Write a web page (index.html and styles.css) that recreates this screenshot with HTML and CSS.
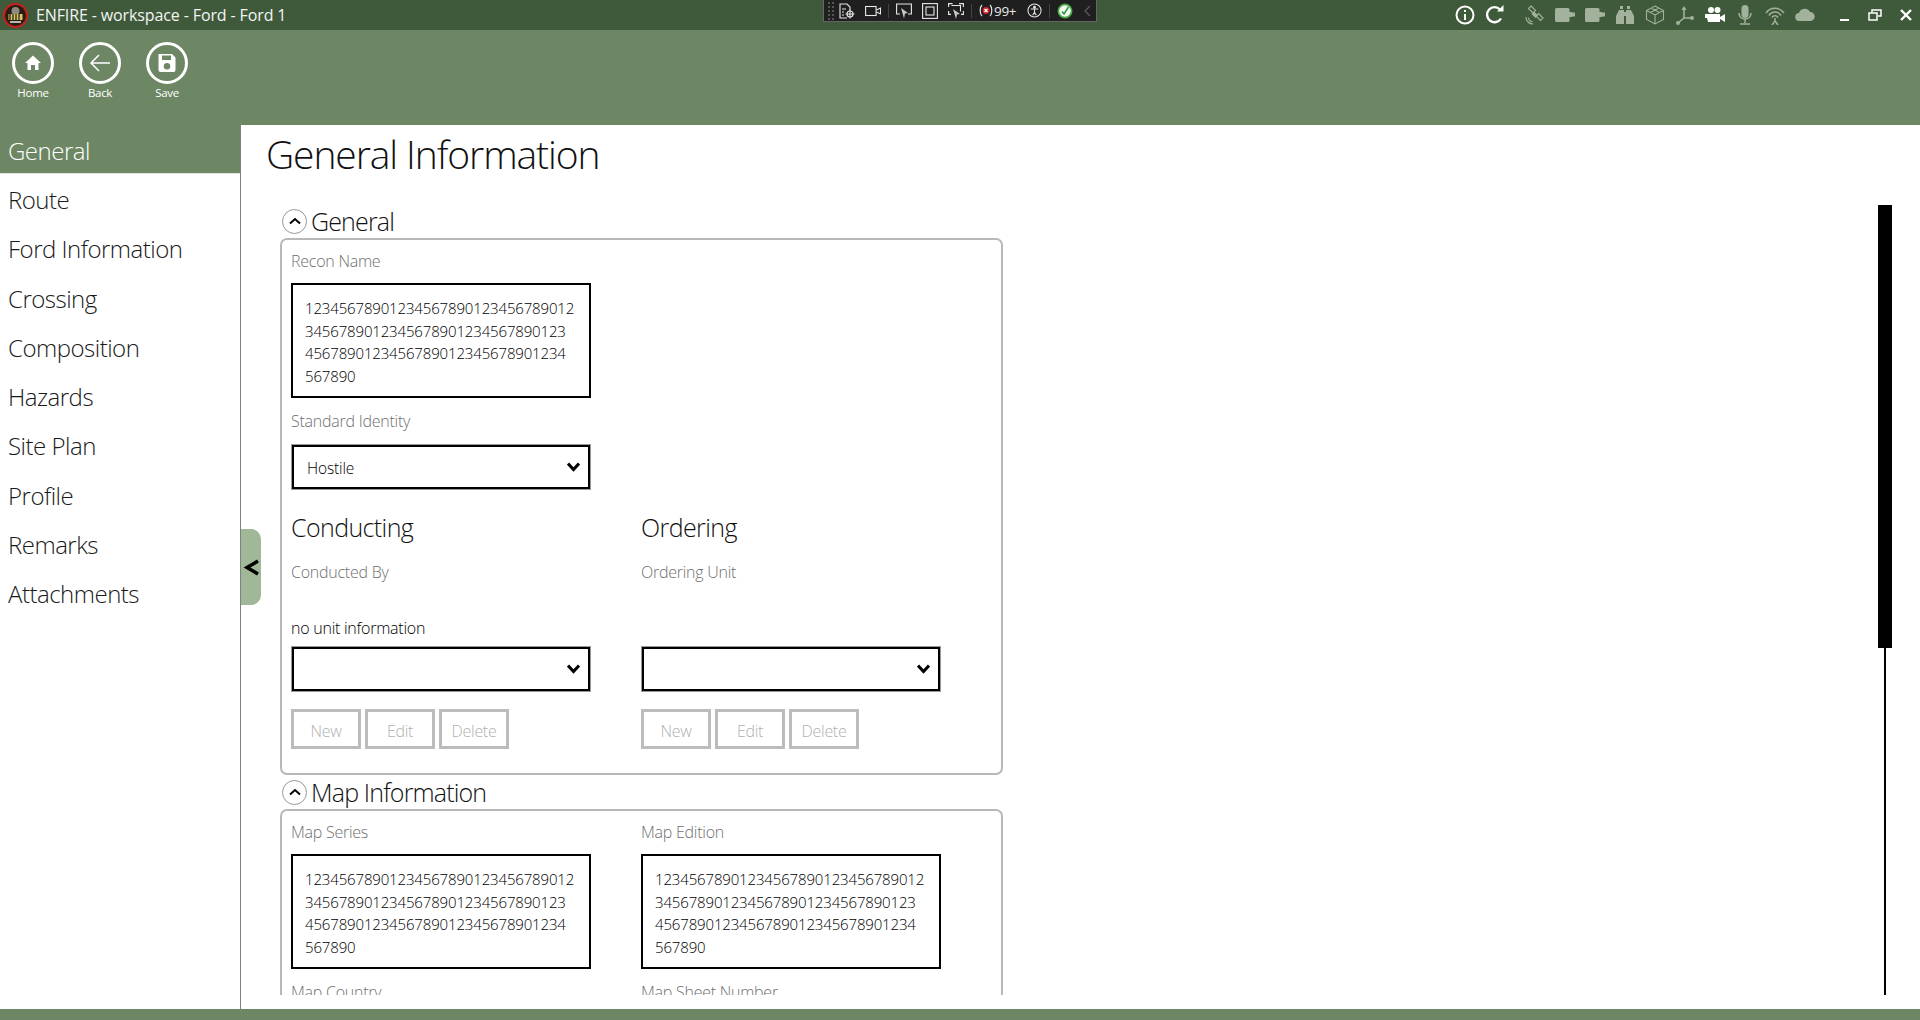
FILE: index.html
```html
<!DOCTYPE html>
<html>
<head>
    <title>ENFIRE - workspace - Ford - Ford 1</title>
    <link rel="stylesheet" href="styles.css">
</head>
<body>
    <div class="app">
        <header class="titlebar">
            <div class="title-left">
                <svg class="logo" width="25" height="25" viewBox="0 0 25 25">
                    <circle cx="12.5" cy="12.5" r="11.5" fill="#2a1c14" stroke="#c8201c" stroke-width="2"/>
                    <circle cx="12.5" cy="8" r="4" fill="#8f8a7c"/>
                    <rect x="5.5" y="11" width="14" height="6" fill="#d8c860"/>
                    <path d="M7 11v6M10 11v6M13 11v6M16 11v6" stroke="#1c1c1c" stroke-width="1.2"/>
                    <path d="M7 19h11" stroke="#b8b8b0" stroke-width="2"/>
                </svg>
                <span class="app-title">ENFIRE - workspace - Ford - Ford 1</span>
            </div>

            <div class="recorder">
                <span class="grip"></span>
                <div class="rec-group">
                    <svg width="16" height="16" viewBox="0 0 16 16" fill="none" stroke="#e8e8e8" stroke-width="1.1">
                        <path d="M8 15H1V1h7l3 3v3M3 6h4M3 9h2M3 12h2"/>
                        <circle cx="11" cy="11" r="3"/>
                        <path d="M11 6.500v9M6.500 11h9"/>
                    </svg>
                    <svg width="16" height="12" viewBox="0 0 16 12" fill="none" stroke="#e8e8e8" stroke-width="1.1">
                        <rect x=".6" y="1.500" width="10.500" height="9"/>
                        <path d="M11.500 5l4-2v6l-4-2"/>
                    </svg>
                </div>
                <span class="rec-sep"></span>
                <div class="rec-group">
                    <svg width="16" height="16" viewBox="0 0 16 16" fill="none" stroke="#e8e8e8" stroke-width="1.1">
                        <path d="M4 11H.6V1h14.800v10H12"/>
                        <path d="M5 5l7 5-3 .5-1 5z" fill="#c8c8c8" stroke="none"/>
                    </svg>
                    <svg width="16" height="16" viewBox="0 0 16 16" fill="none" stroke="#e8e8e8" stroke-width="1.1">
                        <rect x=".6" y=".6" width="14.800" height="14.800"/>
                        <rect x="4" y="4" width="8" height="8"/>
                    </svg>
                    <svg width="16" height="16" viewBox="0 0 16 16" fill="none" stroke="#e8e8e8" stroke-width="1.1">
                        <path d="M.6 4V.6h4M11 .6h4.400V4M.6 8v3.400h2.400M15.400 8v3.400H13M3.500 2.500h9v6"/>
                        <path d="M5 6l7 5-3 .5-1 4.500z" fill="#c8c8c8" stroke="none"/>
                    </svg>
                </div>
                <span class="rec-sep"></span>
                <span class="rec-count">
                    <svg width="14" height="13" viewBox="0 0 14 13" fill="none" stroke="#e8e8e8" stroke-width="1.200">
                        <path d="M3 1C.6 3 .6 10 3 12M11 1c2.400 2 2.400 9 0 11"/>
                        <circle cx="7" cy="6.500" r="3.500" fill="#d8202c" stroke="none"/>
                        <path d="M5.500 5l3 3M8.500 5l-3 3" stroke="#fff"/>
                    </svg>
                    <span>99+</span>
                </span>
                <svg class="rec-person" width="15" height="15" viewBox="0 0 16 16" fill="none" stroke="#e8e8e8" stroke-width="1.100">
                    <circle cx="8" cy="8" r="7"/>
                    <circle cx="8" cy="4.500" r="1" fill="#e8e8e8"/>
                    <path d="M4 6.500h8M8 6.500v3.500M8 10l-2 3M8 10l2 3"/>
                </svg>
                <span class="rec-sep"></span>
                <div class="rec-group last">
                    <svg width="16" height="16" viewBox="0 0 16 16">
                        <circle cx="8" cy="8" r="7.500" fill="#45a845"/>
                        <circle cx="8" cy="8" r="5.800" fill="#f4f8f0"/>
                        <path d="M5 8.500l2 2.500 4.500-7" fill="none" stroke="#2f9a3a" stroke-width="1.600"/>
                    </svg>
                    <svg width="7" height="12" viewBox="0 0 7 12" fill="none" stroke="#5c5c5c" stroke-width="1.200">
                        <path d="M6 1L1 6l5 5"/>
                    </svg>
                </div>
            </div>

            <div class="title-right">
                <svg width="20" height="20" viewBox="0 0 20 20" fill="none" stroke="#fff" stroke-width="2">
                    <circle cx="10" cy="10" r="8.500"/>
                    <path d="M10 9v6M10 5v2"/>
                </svg>
                <svg width="20" height="20" viewBox="0 0 20 20" fill="none" stroke="#fff" stroke-width="2.400">
                    <path d="M16 13.500A7.500 7.500 0 1 1 15 4.500"/>
                    <path d="M12 6.500h6.500V0z" fill="#fff" stroke="none"/>
                </svg>
                <span class="tb-gap"></span>
                <svg width="20" height="20" viewBox="0 0 20 20" fill="none" stroke="#a3b29c" stroke-width="1.200">
                    <path d="M6 1l4.500 4.500-2.500 2.500L3.500 3.500zM13.500 8.500L18 13l-2.500 2.500L11 11z"/>
                    <path d="M9 6.500l4 4-2.500 2.500-4-4z" fill="#a3b29c" stroke="none"/>
                    <path d="M1 12c0 4 3 7 7 7M3.500 12.500c0 2.500 2 4 4 4"/>
                </svg>
                <svg width="20" height="20" viewBox="0 0 20 20" fill="#a3b29c">
                    <rect x="0" y="3" width="14.500" height="14" rx="1.500"/>
                    <path d="M14 7h3v5h-3zM17 7.500h3v4h-3z"/>
                </svg>
                <svg width="20" height="20" viewBox="0 0 20 20" fill="#a3b29c">
                    <rect x="0" y="3" width="14.500" height="14" rx="1.500"/>
                    <path d="M14 7h3v5h-3zM17 7.500h3v4h-3z"/>
                </svg>
                <svg width="20" height="20" viewBox="0 0 20 20" fill="#a3b29c">
                    <path d="M5 1h3v3H5zM12 1h3v3h-3zM4 5h5v14H1V11zM11 5h5l3 6v8h-8zM9 7h2v4H9z"/>
                </svg>
                <svg width="20" height="20" viewBox="0 0 20 20" fill="none" stroke="#a3b29c" stroke-width="1.100">
                    <path d="M10 1l8.500 4.500v9L10 19l-8.500-4.500v-9zM1.500 5.500L10 10l8.500-4.500M10 10v9M6 3l8.500 4.500M14 3L5.500 7.500"/>
                </svg>
                <svg width="20" height="20" viewBox="0 0 20 20" fill="none" stroke="#a3b29c" stroke-width="1.600">
                    <path d="M9 3v10L3 18M9 13h9"/>
                    <path d="M6.500 5L9 1l2.500 4z" fill="#a3b29c" stroke="none"/>
                    <circle cx="3" cy="18" r="2" fill="#a3b29c" stroke="none"/>
                    <circle cx="17" cy="13" r="2" fill="#a3b29c" stroke="none"/>
                </svg>
                <svg width="20" height="20" viewBox="0 0 20 20" fill="#fff">
                    <circle cx="6" cy="5" r="3"/>
                    <circle cx="12.500" cy="5" r="3"/>
                    <path d="M0 9h15v8H3l-1-4H0zM15 12l5-3v8l-5-3z"/>
                </svg>
                <svg width="20" height="20" viewBox="0 0 20 20" fill="none" stroke="#a3b29c" stroke-width="1.500">
                    <rect x="6.500" y="0" width="7" height="13" rx="3.500" fill="#a3b29c" stroke="none"/>
                    <path d="M4 8c0 8 12 8 12 0M10 14v4M5 19h10"/>
                </svg>
                <svg width="20" height="20" viewBox="0 0 20 20" fill="none" stroke="#a3b29c" stroke-width="1.500">
                    <path d="M1 8a11 11 0 0 1 18 0M4 10.500a7 7 0 0 1 12 0M7 12.500a3.500 3.500 0 0 1 6 0"/>
                    <path d="M10 13v3l-3 4M10 16l3 4"/>
                </svg>
                <svg width="20" height="20" viewBox="0 0 20 20" fill="#a3b29c">
                    <path d="M4.500 16a4 4 0 0 1-.5-8A6 6 0 0 1 15 7a4.500 4.500 0 0 1 .5 9z"/>
                </svg>
                <div class="win-buttons">
                    <svg width="12" height="12" viewBox="0 0 12 12" fill="#fff"><rect x="1" y="10" width="9" height="2"/></svg>
                    <svg width="14" height="12" viewBox="0 0 14 12" fill="none" stroke="#fff" stroke-width="1.500">
                        <rect x="1" y="4" width="8" height="7"/>
                        <path d="M4 3.500V1h9v6h-3"/>
                    </svg>
                    <svg width="14" height="14" viewBox="0 0 14 14" fill="none" stroke="#fff" stroke-width="2.400">
                        <path d="M2 2l10 10M12 2L2 12"/>
                    </svg>
                </div>
            </div>
        </header>

        <div class="toolbar">
            <a class="tool">
                <span class="tool-circle">
                    <svg width="20" height="20" viewBox="0 0 20 20" fill="#fff">
                        <path d="M10 2.500L18 10h-2.500v7H12v-5H8v5H4.500v-7H2z"/>
                    </svg>
                </span>
                <span class="tool-label">Home</span>
            </a>
            <a class="tool">
                <span class="tool-circle">
                    <svg width="22" height="22" viewBox="0 0 22 22" fill="none" stroke="#fff" stroke-width="1.500">
                        <path d="M21 11H2M10 3l-8 8 8 8"/>
                    </svg>
                </span>
                <span class="tool-label">Back</span>
            </a>
            <a class="tool">
                <span class="tool-circle">
                    <svg width="20" height="20" viewBox="0 0 20 20" fill="#fff">
                        <path fill-rule="evenodd" d="M1.500 1H15l3.500 3.500V17a2 2 0 0 1-2 2h-13a2 2 0 0 1-2-2zM5 2.500V7h9V2.500zM10 10a3 3 0 1 0 0 6.500A3 3 0 0 0 10 10z"/>
                    </svg>
                </span>
                <span class="tool-label">Save</span>
            </a>
        </div>

        <div class="main">
            <nav class="sidebar">
                <a class="nav-item active">General</a>
                <a class="nav-item">Route</a>
                <a class="nav-item">Ford Information</a>
                <a class="nav-item">Crossing</a>
                <a class="nav-item">Composition</a>
                <a class="nav-item">Hazards</a>
                <a class="nav-item">Site Plan</a>
                <a class="nav-item">Profile</a>
                <a class="nav-item">Remarks</a>
                <a class="nav-item">Attachments</a>
                <div class="collapse-tab">
                    <svg width="16" height="17" viewBox="0 0 16 17" fill="none" stroke="#000" stroke-width="3.500">
                        <path d="M15 2L4 8.500 15 15"/>
                    </svg>
                </div>
            </nav>

            <div class="content">
                <h1>General Information</h1>
                <div class="content-body">
                    <div class="scroller">
                        <section class="group">
                            <div class="group-head">
                                <span class="toggle">
                                    <svg width="12" height="8" viewBox="0 0 12 8" fill="none" stroke="#000" stroke-width="2"><path d="M1 6.500l5-4.500 5 4.500"/></svg>
                                </span>
                                <span class="group-title">General</span>
                            </div>
                            <div class="group-box general-box">
                                <div class="field-label">Recon Name</div>
                                <div class="textbox">12345678901234567890123456789012<br>3456789012345678901234567890123<br>4567890123456789012345678901234<br>567890</div>
                                <div class="field-label second">Standard Identity</div>
                                <div class="select">
                                    <span class="select-value">Hostile</span>
                                    <svg width="13" height="10" viewBox="0 0 13 10" fill="none" stroke="#000" stroke-width="3"><path d="M1 1.500l5.500 6 5.500-6"/></svg>
                                </div>
                                <div class="columns">
                                    <div class="column">
                                        <h2>Conducting</h2>
                                        <div class="field-label by">Conducted By</div>
                                        <div class="unit-info">no unit information</div>
                                        <div class="select">
                                            <span class="select-value"></span>
                                            <svg width="13" height="10" viewBox="0 0 13 10" fill="none" stroke="#000" stroke-width="3"><path d="M1 1.500l5.500 6 5.500-6"/></svg>
                                        </div>
                                        <div class="btn-row">
                                            <button class="btn" disabled>New</button>
                                            <button class="btn" disabled>Edit</button>
                                            <button class="btn" disabled>Delete</button>
                                        </div>
                                    </div>
                                    <div class="column">
                                        <h2>Ordering</h2>
                                        <div class="field-label by">Ordering Unit</div>
                                        <div class="unit-info"></div>
                                        <div class="select">
                                            <span class="select-value"></span>
                                            <svg width="13" height="10" viewBox="0 0 13 10" fill="none" stroke="#000" stroke-width="3"><path d="M1 1.500l5.500 6 5.500-6"/></svg>
                                        </div>
                                        <div class="btn-row">
                                            <button class="btn" disabled>New</button>
                                            <button class="btn" disabled>Edit</button>
                                            <button class="btn" disabled>Delete</button>
                                        </div>
                                    </div>
                                </div>
                            </div>
                        </section>

                        <section class="group">
                            <div class="group-head">
                                <span class="toggle">
                                    <svg width="12" height="8" viewBox="0 0 12 8" fill="none" stroke="#000" stroke-width="2"><path d="M1 6.500l5-4.500 5 4.500"/></svg>
                                </span>
                                <span class="group-title">Map Information</span>
                            </div>
                            <div class="group-box">
                                <div class="columns">
                                    <div class="column">
                                        <div class="field-label">Map Series</div>
                                        <div class="textbox">12345678901234567890123456789012<br>3456789012345678901234567890123<br>4567890123456789012345678901234<br>567890</div>
                                        <div class="field-label second">Map Country</div>
                                    </div>
                                    <div class="column">
                                        <div class="field-label">Map Edition</div>
                                        <div class="textbox">12345678901234567890123456789012<br>3456789012345678901234567890123<br>4567890123456789012345678901234<br>567890</div>
                                        <div class="field-label second">Map Sheet Number</div>
                                    </div>
                                </div>
                            </div>
                        </section>
                    </div>
                    <div class="scrollbar">
                        <div class="scroll-thumb"></div>
                    </div>
                </div>
            </div>
        </div>

        <div class="bottom-bar"></div>
    </div>
</body>
</html>
```

FILE: styles.css
```css
* {
    box-sizing: border-box;
}

body {
    margin: 0;
    font-family: "Open Sans", "Noto Sans", sans-serif;
    font-weight: 300;
    color: #000;
    background-color: #fff;
}

.app {
    display: flex;
    flex-direction: column;
    height: 1020px;
    overflow: hidden;
}

.titlebar {
    display: grid;
    grid-template-columns: 1fr auto 1fr;
    height: 30px;
    background-color: #3f5a3a;
    color: #fff;
}

.title-left {
    display: flex;
    align-items: center;
    padding-left: 3px;
    gap: 8px;
}

.logo {
    flex-shrink: 0;
}

.app-title {
    font-size: 16px;
    font-weight: 400;
    letter-spacing: -0.12px;
    color: #f4f4f4;
}

.recorder {
    display: flex;
    align-items: center;
    height: 22px;
    width: 274px;
    padding-left: 4px;
    gap: 7px;
    background-color: #1f1f1f;
    border: 1px solid #666;
    border-top: none;
}

.grip {
    width: 6px;
    height: 18px;
    margin-right: -2px;
    border-left: 2px dotted #555;
    border-right: 2px dotted #555;
}

.rec-group {
    display: flex;
    align-items: center;
    gap: 10px;
}

.rec-group.last {
    gap: 11px;
}

.rec-sep {
    width: 1px;
    height: 14px;
    background-color: #444;
}

.rec-count {
    display: flex;
    align-items: center;
    gap: 1px;
    font-size: 13.5px;
    font-weight: 400;
    letter-spacing: -0.3px;
    color: #e8e8e8;
}

.rec-person {
    margin-left: 4px;
}

.title-right {
    display: flex;
    align-items: center;
    justify-content: flex-end;
    gap: 10px;
    padding-right: 7px;
}

.tb-gap {
    width: 0;
}

.win-buttons {
    display: flex;
    align-items: center;
    gap: 17px;
    margin-left: 14px;
}

.toolbar {
    display: flex;
    height: 95px;
    padding: 12px 0 0 12px;
    gap: 25px;
    background-color: #6d8764;
}

.tool {
    display: flex;
    flex-direction: column;
    align-items: center;
    width: 42px;
    color: #fff;
}

.tool-circle {
    display: flex;
    align-items: center;
    justify-content: center;
    width: 42px;
    height: 42px;
    border: 3px solid #fff;
    border-radius: 50%;
}

.tool-label {
    margin-top: 1px;
    font-size: 11.5px;
    font-weight: 400;
    letter-spacing: -0.3px;
}

.main {
    display: flex;
    flex: 1;
    min-height: 0;
}

.sidebar {
    position: relative;
    flex-shrink: 0;
    width: 241px;
    border-right: 1px solid #808080;
}

.nav-item {
    display: block;
    height: 49.3px;
    padding-left: 8px;
    font-size: 24px;
    line-height: 51px;
    letter-spacing: -0.5px;
    color: #1a1a1a;
}

.nav-item.active {
    height: 49px;
    background-color: #6d8764;
    color: #fff;
    border-bottom: 1px solid #dfe6dc;
}

.collapse-tab {
    position: absolute;
    top: 404px;
    left: 240px;
    display: flex;
    align-items: center;
    justify-content: center;
    width: 21px;
    height: 76px;
    background-color: #a0b897;
    border-left: 1px solid #808080;
    border-radius: 0 10px 10px 0;
}

.content {
    flex: 1;
    min-width: 0;
}

h1 {
    height: 80px;
    margin: 0;
    padding-left: 25px;
    font-size: 39px;
    font-weight: 300;
    line-height: 57px;
    letter-spacing: -1.1px;
    color: #111;
}

.content-body {
    display: flex;
    height: 790px;
}

.scroller {
    flex: 1;
    min-width: 0;
    padding-left: 39px;
    overflow: hidden;
}

.scrollbar {
    display: flex;
    justify-content: center;
    position: relative;
    width: 14px;
    margin-right: 28px;
}

.scrollbar::before {
    content: "";
    width: 2px;
    height: 100%;
    background-color: #000;
}

.scroll-thumb {
    position: absolute;
    top: 0;
    left: 0;
    width: 14px;
    height: 443px;
    background-color: #000;
}

.group {
    width: 723px;
}

.group-head {
    display: flex;
    align-items: center;
    height: 33px;
    padding: 0 0 1px 2px;
    gap: 4px;
}

.toggle {
    display: flex;
    align-items: center;
    justify-content: center;
    width: 25px;
    height: 25px;
    border: 1px solid #999;
    border-radius: 50%;
}

.group-title {
    font-size: 25px;
    line-height: 30px;
    letter-spacing: -0.85px;
    color: #111;
}

.group-box {
    padding: 8px 0 0 9px;
    border: 2px solid #b8b8b8;
    border-radius: 7px;
}

.general-box {
    height: 537px;
    margin-bottom: 1px;
}

.field-label {
    height: 35px;
    font-size: 16px;
    line-height: 26px;
    letter-spacing: -0.25px;
    color: #6f6f6f;
}

.field-label.second {
    height: 36px;
    margin-top: 10px;
}

.field-label.by {
    height: 57px;
    margin: 0;
}

.textbox {
    width: 300px;
    height: 115px;
    padding: 12px 0 0 12px;
    border: 2px solid #000;
    font-size: 15px;
    line-height: 22.500px;
    letter-spacing: -0.15px;
    white-space: nowrap;
    color: #000;
}

.select {
    display: flex;
    align-items: center;
    justify-content: space-between;
    width: 300px;
    height: 46px;
    padding: 0 10px 0 15px;
    border: 1px solid #999;
    box-shadow: inset 0 0 0 2px #000;
    font-size: 15.500px;
    letter-spacing: -0.15px;
}

.select-value {
    padding-top: 2px;
}

.columns {
    display: flex;
    gap: 50px;
}

.column {
    width: 300px;
}

.general-box .columns {
    margin-top: 20px;
}

h2 {
    height: 49px;
    margin: 0;
    font-size: 25px;
    font-weight: 300;
    line-height: 34px;
    letter-spacing: -0.6px;
    color: #111;
}

.unit-info {
    height: 30px;
    font-size: 16px;
    font-weight: 300;
    line-height: 24px;
    letter-spacing: -0.25px;
    color: #000;
}

.btn-row {
    display: flex;
    gap: 4px;
    margin-top: 17px;
}

.btn {
    width: 70px;
    height: 40px;
    padding: 4px 0 0;
    background-color: #fff;
    border: 3px solid #bcbcbc;
    font-family: inherit;
    font-size: 16px;
    font-weight: 300;
    letter-spacing: -0.3px;
    color: #b0b0b0;
}

.bottom-bar {
    height: 11px;
    background-color: #6d8764;
}
```
